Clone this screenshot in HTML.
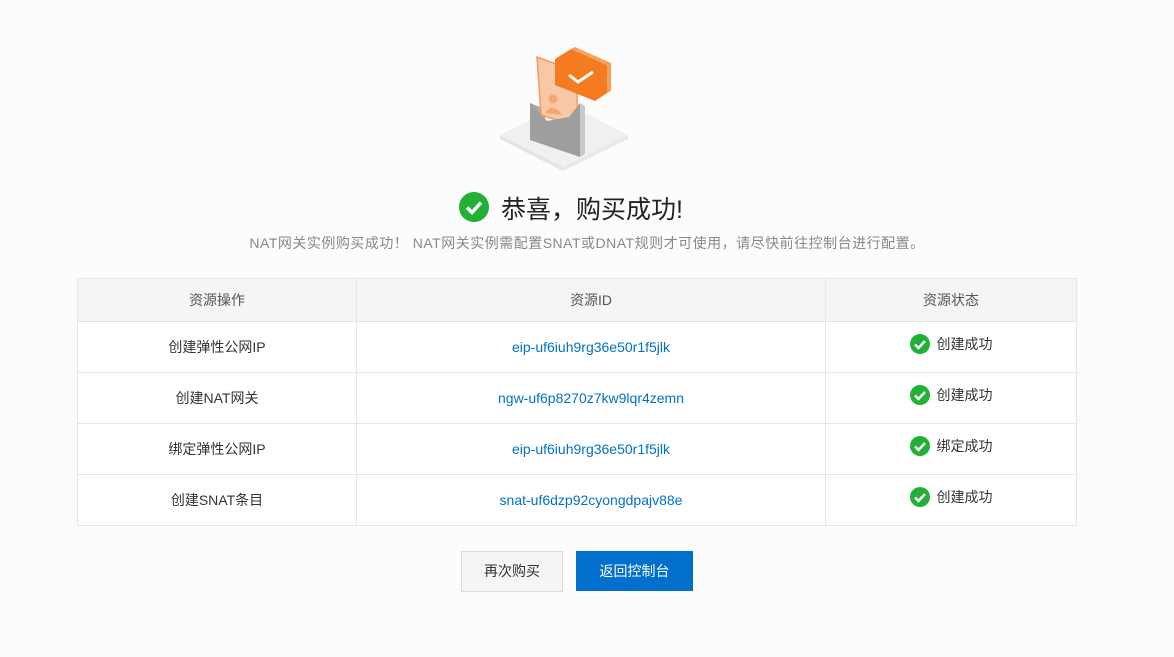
<!DOCTYPE html>
<html><head><meta charset="utf-8"><style>
body{margin:0;background:#fcfcfc;font-family:"Liberation Sans","Noto Sans CJK SC",sans-serif;width:1174px;height:657px;position:relative;overflow:hidden}
.abs{position:absolute}
table{position:absolute;left:77px;top:278px;width:1000px;border-collapse:collapse;font-size:14px;color:#333;background:#fff}
td,th{border:1px solid #e6e6e6;text-align:center;padding:0}
th{height:42px;background:#f5f5f5;font-weight:normal;color:#555}
td{height:50px}
a{color:#0070cc;text-decoration:none}
.ok{display:inline-flex;align-items:center;gap:7px;position:relative;top:-2px}
.ok svg{display:block}
.btn{position:absolute;top:551px;height:39px;line-height:39px;text-align:center;font-size:14px}
</style></head><body>
<svg class="abs" style="left:495px;top:45px" width="140" height="130" viewBox="0 0 140 130">
<polygon points="5,90 70,58 133,90 68,122" fill="#f0f0f0"/>
<polygon points="5,90 68,122 68,126 5,94" fill="#e4e4e4"/>
<polygon points="68,122 133,90 133,94 68,126" fill="#e9e9e9"/>
<polygon points="35,58 50,64 50,97 35,92" fill="#a8a8a8"/>
<polygon points="42,12 80,26 84,82 46,70" fill="#f8c7a6" stroke="#f29a61" stroke-width="1.5"/>
<circle cx="58" cy="54" r="4.5" fill="#f5a56e"/>
<path d="M50 68 q8 -11 17 2 z" fill="#f5a56e"/>
<polygon points="35,58 52,76 74,72 85,58 85,112 35,95" fill="#9e9e9e"/>
<polygon points="85,58 90,61 90,109 85,112" fill="#c9c9c9"/>
<polygon points="60,14 76,4 112,20 112,48 100,56 60,40" fill="#f47b20"/>
<polygon points="76,4 112,20 112,48 116,46 116,18 80,2" fill="#f6a25e"/>
<path d="M74 30 l9 7 l15 -10" stroke="#fff" stroke-width="3" fill="none"/>
</svg>
<svg class="abs" style="left:459px;top:192px" width="30" height="30" viewBox="0 0 30 30"><circle cx="15" cy="15" r="15" fill="#22b035"/><path d="M8 15.5l5 5 9-10" stroke="#fff" stroke-width="3.5" fill="none"/></svg>
<div class="abs" style="left:501px;top:190px;font-size:25px;color:#222">恭喜，购买成功!</div>
<div class="abs" style="left:0;width:1174px;top:233px;text-align:center;font-size:14px;color:#888;letter-spacing:0.5px">NAT网关实例购买成功！ NAT网关实例需配置SNAT或DNAT规则才可使用，请尽快前往控制台进行配置。</div>
<table>
<tr><th style="width:278px">资源操作</th><th style="width:468px">资源ID</th><th>资源状态</th></tr>
<tr><td>创建弹性公网IP</td><td><a>eip-uf6iuh9rg36e50r1f5jlk</a></td><td><span class="ok"><svg width="20" height="20"><circle cx="10" cy="10" r="10" fill="#22b035"/><path d="M5 10.5l3.5 3.5 6.5-7" stroke="#fff" stroke-width="2.5" fill="none"/></svg>创建成功</span></td></tr>
<tr><td>创建NAT网关</td><td><a>ngw-uf6p8270z7kw9lqr4zemn</a></td><td><span class="ok"><svg width="20" height="20"><circle cx="10" cy="10" r="10" fill="#22b035"/><path d="M5 10.5l3.5 3.5 6.5-7" stroke="#fff" stroke-width="2.5" fill="none"/></svg>创建成功</span></td></tr>
<tr><td>绑定弹性公网IP</td><td><a>eip-uf6iuh9rg36e50r1f5jlk</a></td><td><span class="ok"><svg width="20" height="20"><circle cx="10" cy="10" r="10" fill="#22b035"/><path d="M5 10.5l3.5 3.5 6.5-7" stroke="#fff" stroke-width="2.5" fill="none"/></svg>绑定成功</span></td></tr>
<tr><td>创建SNAT条目</td><td><a>snat-uf6dzp92cyongdpajv88e</a></td><td><span class="ok"><svg width="20" height="20"><circle cx="10" cy="10" r="10" fill="#22b035"/><path d="M5 10.5l3.5 3.5 6.5-7" stroke="#fff" stroke-width="2.5" fill="none"/></svg>创建成功</span></td></tr>
</table>
<div class="btn" style="left:461px;width:100px;border:1px solid #ddd;background:#f5f5f5;color:#333">再次购买</div>
<div class="btn" style="left:576px;width:117px;height:40px;line-height:40px;background:#0070cc;color:#fff">返回控制台</div>
</body></html>
